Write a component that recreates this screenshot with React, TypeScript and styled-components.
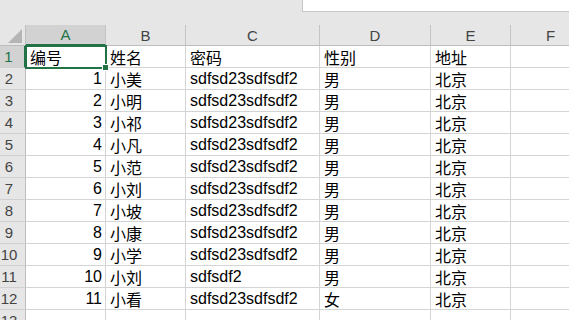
import styled, { createGlobalStyle } from "styled-components";

interface Person {
  id: number;
  name: string;
  password: string;
  gender: string;
  city: string;
}

const people: Person[] = [
  { id: 1, name: "小美", password: "sdfsd23sdfsdf2", gender: "男", city: "北京" },
  { id: 2, name: "小明", password: "sdfsd23sdfsdf2", gender: "男", city: "北京" },
  { id: 3, name: "小祁", password: "sdfsd23sdfsdf2", gender: "男", city: "北京" },
  { id: 4, name: "小凡", password: "sdfsd23sdfsdf2", gender: "男", city: "北京" },
  { id: 5, name: "小范", password: "sdfsd23sdfsdf2", gender: "男", city: "北京" },
  { id: 6, name: "小刘", password: "sdfsd23sdfsdf2", gender: "男", city: "北京" },
  { id: 7, name: "小坡", password: "sdfsd23sdfsdf2", gender: "男", city: "北京" },
  { id: 8, name: "小康", password: "sdfsd23sdfsdf2", gender: "男", city: "北京" },
  { id: 9, name: "小学", password: "sdfsd23sdfsdf2", gender: "男", city: "北京" },
  { id: 10, name: "小刘", password: "sdfsdf2", gender: "男", city: "北京" },
  { id: 11, name: "小看", password: "sdfsd23sdfsdf2", gender: "女", city: "北京" },
];

const columns = ["A", "B", "C", "D", "E", "F"];
const green = "#217346";

const GlobalStyle = createGlobalStyle`
  html, body {
    margin: 0;
    padding: 0;
    background: #e6e6e6;
  }
`;

const Window = styled.div`
  width: 569px;
  height: 320px;
  overflow: hidden;
  background: #e6e6e6;
  font-family: "Liberation Sans", "Noto Sans CJK SC", sans-serif;
`;

const TopBand = styled.div`
  height: 25px;
  display: flex;
  justify-content: flex-end;
`;

const FormulaBox = styled.div`
  width: 267px;
  height: 12px;
  box-sizing: border-box;
  background: #fff;
  border-left: 1px solid #c6c6c6;
  border-bottom: 1px solid #c6c6c6;
`;

const Sheet = styled.div`
  display: grid;
  width: max-content;
  grid-template-columns: 26px 80px 80px 134px 111px 80px 80px;
  grid-template-rows: 21px;
  grid-auto-rows: 22px;
`;

const Corner = styled.div`
  box-sizing: border-box;
  border-right: 1px solid #bdbdbd;
  border-bottom: 1px solid #bdbdbd;
  display: flex;
  align-items: flex-end;
  justify-content: flex-end;
  padding: 0 3px 2px 0;
`;

const CornerMark = styled.div`
  width: 0;
  height: 0;
  border-left: 14px solid transparent;
  border-bottom: 14px solid #b5b5b5;
`;

const ColHead = styled.div<{ $active?: boolean }>`
  box-sizing: border-box;
  display: flex;
  align-items: center;
  justify-content: center;
  font-size: 15px;
  color: ${(p) => (p.$active ? green : "#444")};
  background: ${(p) => (p.$active ? "#d2d2d2" : "#e6e6e6")};
  border-right: 1px solid #c4c4c4;
  border-bottom: ${(p) => (p.$active ? `2px solid ${green}` : "1px solid #bdbdbd")};
`;

const RowHead = styled.div<{ $active?: boolean }>`
  box-sizing: border-box;
  display: flex;
  align-items: center;
  justify-content: center;
  padding-right: 7px;
  font-size: 15px;
  color: ${(p) => (p.$active ? green : "#444")};
  background: ${(p) => (p.$active ? "#d2d2d2" : "#e6e6e6")};
  border-right: ${(p) => (p.$active ? `2px solid ${green}` : "1px solid #bdbdbd")};
  border-bottom: 1px solid #d0d0d0;
`;

const Cell = styled.div<{ $align?: "left" | "right" }>`
  position: relative;
  box-sizing: border-box;
  display: flex;
  align-items: center;
  justify-content: ${(p) => (p.$align === "right" ? "flex-end" : "flex-start")};
  padding: 1px 3px 0 4px;
  font-size: 16px;
  color: #000;
  white-space: nowrap;
  background: #fff;
  border-right: 1px solid #d4d4d4;
  border-bottom: 1px solid #d4d4d4;
`;

const Selection = styled.div`
  position: absolute;
  top: -1px;
  left: -1px;
  right: -2px;
  bottom: -2px;
  border: 2px solid ${green};
  z-index: 2;
  pointer-events: none;
`;

const FillHandle = styled.div`
  position: absolute;
  right: -4px;
  bottom: -4px;
  width: 5px;
  height: 5px;
  background: ${green};
  border: 1px solid #fff;
`;

function Spreadsheet() {
  return (
    <Sheet>
      <Corner>
        <CornerMark />
      </Corner>
      {columns.map((c, i) => (
        <ColHead key={c} $active={i === 0}>
          {c}
        </ColHead>
      ))}

      <RowHead $active>1</RowHead>
      <Cell>
        编号
        <Selection>
          <FillHandle />
        </Selection>
      </Cell>
      <Cell>姓名</Cell>
      <Cell>密码</Cell>
      <Cell>性别</Cell>
      <Cell>地址</Cell>
      <Cell />

      {people.map((p, i) => [
        <RowHead key={`h${p.id}`}>{i + 2}</RowHead>,
        <Cell key={`a${p.id}`} $align="right">{p.id}</Cell>,
        <Cell key={`b${p.id}`}>{p.name}</Cell>,
        <Cell key={`c${p.id}`}>{p.password}</Cell>,
        <Cell key={`d${p.id}`}>{p.gender}</Cell>,
        <Cell key={`e${p.id}`}>{p.city}</Cell>,
        <Cell key={`f${p.id}`} />,
      ])}

      <RowHead>13</RowHead>
      {columns.map((c) => (
        <Cell key={`r13${c}`} />
      ))}
    </Sheet>
  );
}

export default function App() {
  return (
    <Window>
      <GlobalStyle />
      <TopBand>
        <FormulaBox />
      </TopBand>
      <Spreadsheet />
    </Window>
  );
}
